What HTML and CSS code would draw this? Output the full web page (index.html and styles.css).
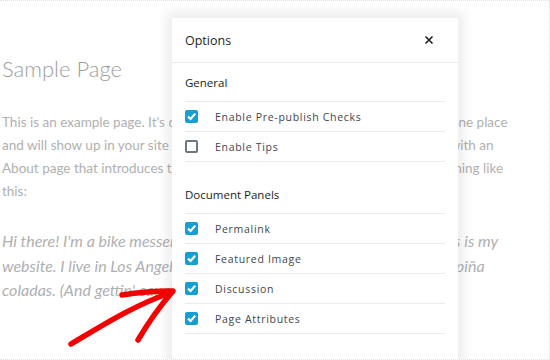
FILE: index.html
```html
<!DOCTYPE html>
<html lang="en">

<head>
    <meta charset="UTF-8">
    <meta name="viewport" content="width=device-width, initial-scale=1.0">
    <title>Sample Page</title>
    <link rel="stylesheet" href="styles.css">
</head>

<body>
    <div class="frame">
        <div class="page">
            <h1 class="page__title">Sample Page</h1>
            <p class="page__text">This is an example page. It's different from a blog post because it will stay in one place<br>
                and will show up in your site navigation (in most themes). Most people start with an<br>
                About page that introduces them to potential site visitors. It might say something like<br>
                this:</p>
            <p class="page__quote">Hi there! I'm a bike messenger by day, aspiring actor by night, and this is my<br>
                website. I live in Los Angeles, have a great dog named Jack, and I like piña<br>
                coladas. (And gettin' caught in the rain.)</p>
            <p class="page__text page__text_last">...or something like this:</p>
        </div>

        <div class="modal">
            <div class="modal__header">
                <span class="modal__title">Options</span>
                <svg class="modal__close" width="10" height="10" viewBox="0 0 10 10">
                    <path d="M1.5 1.5 L8.5 8.5 M8.5 1.5 L1.5 8.5" stroke="#1e1e1e" stroke-width="1.6" fill="none" />
                </svg>
            </div>

            <div class="section">
                <div class="section__title">General</div>
                <ul class="options">
                    <li class="option"><span class="box box_checked"></span>Enable Pre-publish Checks</li>
                    <li class="option"><span class="box"></span>Enable Tips</li>
                </ul>
            </div>

            <div class="section">
                <div class="section__title">Document Panels</div>
                <ul class="options">
                    <li class="option"><span class="box box_checked"></span>Permalink</li>
                    <li class="option"><span class="box box_checked"></span>Featured Image</li>
                    <li class="option"><span class="box box_checked"></span>Discussion</li>
                    <li class="option"><span class="box box_checked"></span>Page Attributes</li>
                </ul>
            </div>
        </div>

        <!-- hand drawn arrow pointing at Discussion -->
        <svg class="arrow" width="550" height="360" viewBox="0 0 550 360">
            <path d="M71 343 C100 326 130 306 172 291" stroke="#f40000" stroke-width="5.5" fill="none" stroke-linecap="round" />
            <path d="M122 294 C140 291 158 290 173 290 C160 305 148 322 138 339" stroke="#f40000" stroke-width="5.5" fill="none" stroke-linecap="round" stroke-linejoin="round" />
        </svg>
    </div>
</body>

</html>
```

FILE: styles.css
```css
* {
    box-sizing: border-box;
}

html,
body {
    margin: 0;
    padding: 0;
    background-color: #fff;
}

.frame {
    position: relative;
    width: 550px;
    height: 360px;
    overflow: hidden;
    border: 1px dotted #e2e2e2;
    border-left: none;
}

.page {
    padding: 54px 2px 0;
    font-family: 'Lato', sans-serif;
    color: #b0b0b0;
}

.page__title {
    margin: 0;
    font-size: 22px;
    font-weight: 300;
    line-height: 28px;
    color: #9d9d9d;
}

.page__text {
    margin: 28px 0 0;
    font-size: 13.5px;
    line-height: 23px;
}

.page__quote {
    margin: 26px 0 0;
    font-size: 16px;
    font-style: italic;
    line-height: 24.5px;
}

.page__text_last {
    margin-top: 56px;
}

.modal {
    position: absolute;
    left: 172px;
    top: 17px;
    width: 286px;
    height: 400px;
    background-color: #fff;
    box-shadow: 0 0 10px 6px rgba(0, 0, 0, 0.07);
    font-family: 'Open Sans', sans-serif;
}

.modal__header {
    display: flex;
    align-items: center;
    justify-content: space-between;
    height: 45px;
    padding: 0 24px 0 13px;
    border-bottom: 1px solid #e8eaeb;
}

.modal__title {
    font-size: 12.5px;
    color: #1e1e1e;
}

.section {
    padding: 10px 13px 13px;
}

.section__title {
    font-size: 11.5px;
    line-height: 20px;
    color: #191e23;
    margin-bottom: 8px;
}

.options {
    list-style: none;
    margin: 0;
    padding: 0;
    border-bottom: 1px solid #e8eaeb;
}

.option {
    display: flex;
    align-items: center;
    gap: 17px;
    height: 30px;
    border-top: 1px solid #e8eaeb;
    font-size: 10.5px;
    letter-spacing: 0.7px;
    color: #40464d;
}

.box {
    width: 13px;
    height: 13px;
    border: 2px solid #6c7781;
    border-radius: 2px;
}

.box_checked {
    border: none;
    background-color: #11a0d2;
    background-image: url("data:image/svg+xml,%3Csvg xmlns='http://www.w3.org/2000/svg' width='13' height='13'%3E%3Cpath d='M3 6.6 L5.6 9 L10.2 3.6' stroke='white' stroke-width='2.2' fill='none'/%3E%3C/svg%3E");
}

.arrow {
    position: absolute;
    left: 0;
    top: 0;
    pointer-events: none;
}
```
